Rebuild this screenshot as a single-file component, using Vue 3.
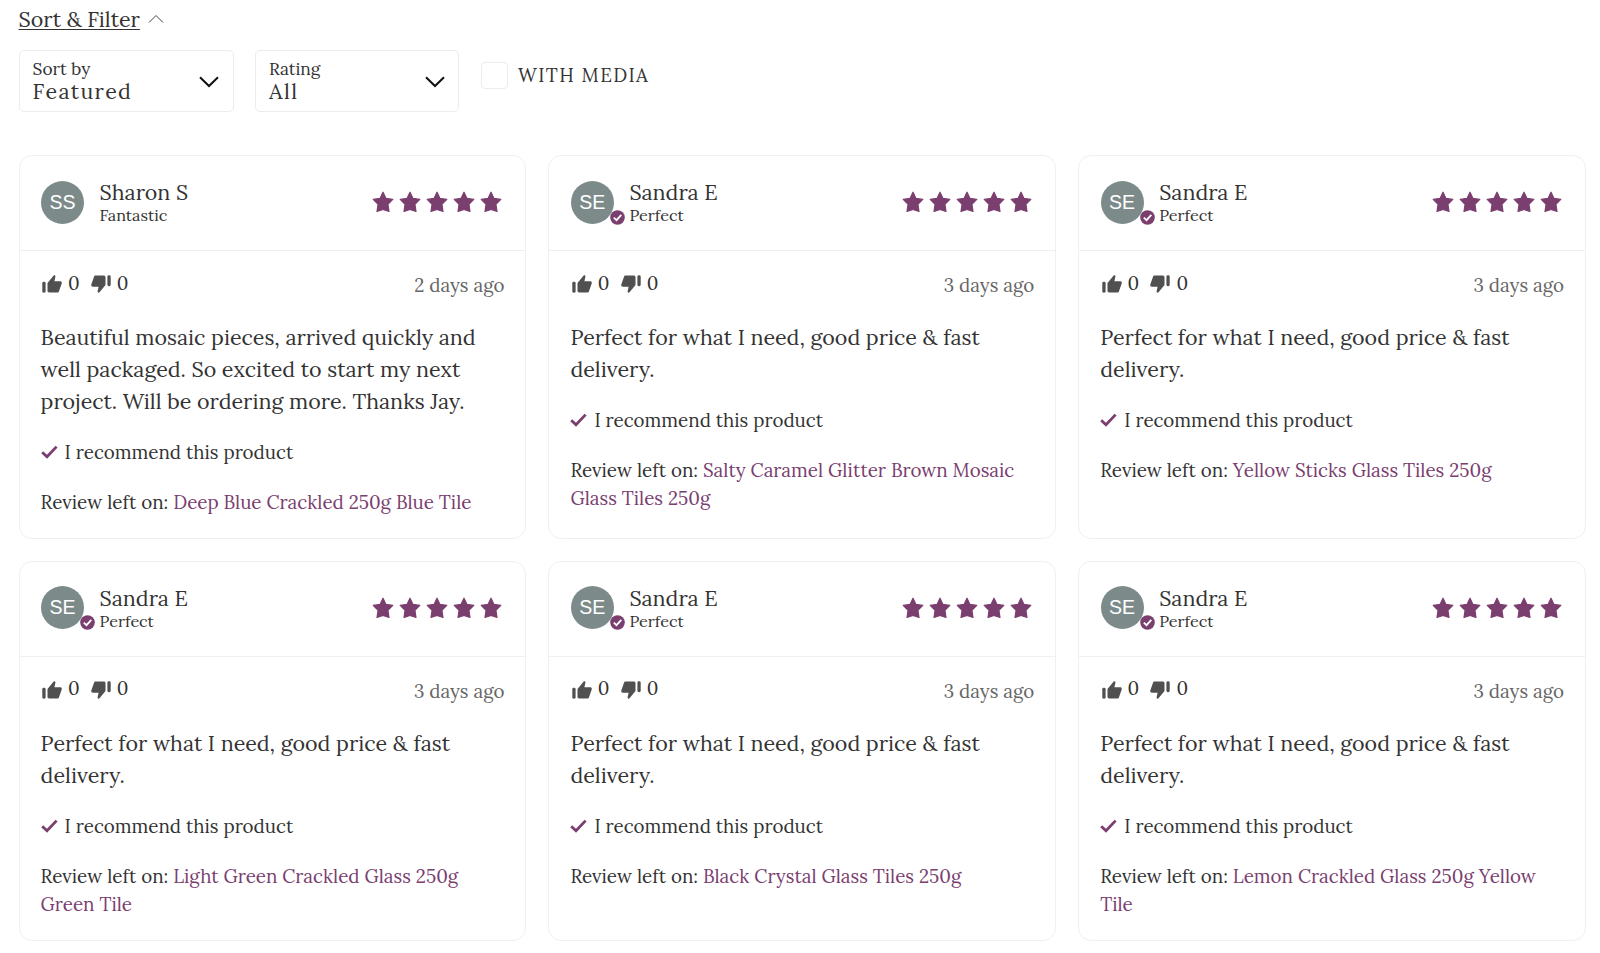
<script setup>
import { ref } from 'vue'

const showFilters = ref(true)
const withMedia = ref(false)

const filters = [
  { id: 'sort', label: 'Sort by', value: 'Featured' },
  { id: 'rating', label: 'Rating', value: 'All' }
]

const sandra = {
  name: 'Sandra E',
  initials: 'SE',
  title: 'Perfect',
  verified: true,
  date: '3 days ago',
  text: 'Perfect for what I need, good price & fast delivery.'
}

const reviews = [
  {
    id: 1,
    name: 'Sharon S',
    initials: 'SS',
    title: 'Fantastic',
    verified: false,
    date: '2 days ago',
    text: 'Beautiful mosaic pieces, arrived quickly and well packaged. So excited to start my next project. Will be ordering more. Thanks Jay.',
    product: 'Deep Blue Crackled 250g Blue Tile'
  },
  { id: 2, ...sandra, product: 'Salty Caramel Glitter Brown Mosaic Glass Tiles 250g' },
  { id: 3, ...sandra, product: 'Yellow Sticks Glass Tiles 250g' },
  { id: 4, ...sandra, product: 'Light Green Crackled Glass 250g Green Tile' },
  { id: 5, ...sandra, product: 'Black Crystal Glass Tiles 250g' },
  { id: 6, ...sandra, product: 'Lemon Crackled Glass 250g Yellow Tile' }
]
</script>

<template>
  <main class="reviews">
    <div class="toggle" @click="showFilters = !showFilters">
      <span class="toggle-label">Sort &amp; Filter</span>
      <svg class="toggle-icon" viewBox="0 0 16 10">
        <path d="M1 8.5 8 1.5l7 7" />
      </svg>
    </div>

    <div v-if="showFilters" class="filters">
      <div v-for="f in filters" :key="f.id" class="select" :class="'select-' + f.id">
        <div>
          <div class="select-label">{{ f.label }}</div>
          <div class="select-value">{{ f.value }}</div>
        </div>
        <svg class="select-icon" viewBox="0 0 20 12">
          <path d="M1 1.2 10 10l9-8.8" />
        </svg>
      </div>
      <div class="media" @click="withMedia = !withMedia">
        <span class="checkbox" :class="{ checked: withMedia }"></span>
        <span class="media-label">WITH MEDIA</span>
      </div>
    </div>

    <section class="grid">
      <article v-for="r in reviews" :key="r.id" class="card">
        <header class="card-header">
          <div class="avatar">
            {{ r.initials }}
            <svg v-if="r.verified" class="badge" viewBox="0 0 15 15">
              <circle cx="7.5" cy="7.5" r="7.3" />
              <path d="M3.8 7.7 6.5 10.2l4.8-5.4" />
            </svg>
          </div>
          <div class="author">
            <div class="name">{{ r.name }}</div>
            <div class="title">{{ r.title }}</div>
          </div>
          <div class="stars">
            <svg v-for="n in 5" :key="n" viewBox="0 0 22 22">
              <path d="M11 1.2 14 7.4l6.8 1-4.9 4.8 1.1 7.3-6-2-6 2 1.1-7.3L1.2 8.4l6.8-1z" />
            </svg>
          </div>
        </header>

        <div class="card-body">
          <div class="meta">
            <div class="votes">
              <svg class="thumb" viewBox="0 0 20 18">
                <rect x="0.3" y="6.8" width="3.3" height="10.9" rx="1.4" />
                <path d="M5.5 8 11.7.5c.9-.6 1.9.2 1.7 1.2l-1 4.6h5.7c1.4 0 2 1.1 1.6 2.3l-2.8 7.8c-.3.8-.8 1.1-1.6 1.1H7.2c-1.1 0-1.7-.7-1.7-1.7z" />
              </svg>
              <span class="count">0</span>
              <svg class="thumb thumb-down" viewBox="0 0 20 18">
                <rect x="0.3" y="6.8" width="3.3" height="10.9" rx="1.4" />
                <path d="M5.5 8 11.7.5c.9-.6 1.9.2 1.7 1.2l-1 4.6h5.7c1.4 0 2 1.1 1.6 2.3l-2.8 7.8c-.3.8-.8 1.1-1.6 1.1H7.2c-1.1 0-1.7-.7-1.7-1.7z" />
              </svg>
              <span class="count">0</span>
            </div>
            <div class="date">{{ r.date }}</div>
          </div>

          <p class="text">{{ r.text }}</p>

          <div class="recommend">
            <svg class="check" viewBox="0 0 17 14">
              <path d="M1.2 7.2 6 11.8 15.6 1.6" />
            </svg>
            <span>I recommend this product</span>
          </div>

          <div class="product">
            Review left on: <a class="product-link">{{ r.product }}</a>
          </div>
        </div>
      </article>
    </section>
  </main>
</template>

<style>
body {
  background: #fff;
}
</style>

<style scoped>
.reviews {
  box-sizing: border-box;
  height: 953px;
  padding: 6px 14px 0 18.6px;
  overflow: hidden;
  font-family: Lora, 'Liberation Serif', serif;
  color: #333;
}

.toggle {
  display: flex;
  align-items: center;
  height: 26px;
  cursor: pointer;
}

.toggle-label {
  font-size: 21.45px;
  line-height: 26px;
  text-decoration: underline;
  text-decoration-thickness: 1px;
  text-underline-offset: 2px;
}

.toggle-icon {
  width: 16px;
  height: 10px;
  margin-left: 8px;
  fill: none;
  stroke: #444;
  stroke-width: 1;
}

.filters {
  display: flex;
  align-items: flex-start;
  margin-top: 18px;
}

.select {
  box-sizing: border-box;
  display: flex;
  align-items: center;
  justify-content: space-between;
  height: 62px;
  margin-right: 21.5px;
  padding: 0 13.5px 0 13px;
  border: 1px solid #ececec;
  border-radius: 5px;
}

.select-sort {
  width: 215px;
}

.select-rating {
  width: 204px;
}

.select-label {
  font-size: 17.3px;
  line-height: 22px;
}

.select-value {
  padding-bottom: 1px;
  font-size: 21.45px;
  line-height: 23px;
  letter-spacing: 1.4px;
}

.select-icon {
  width: 20px;
  height: 12px;
  margin-top: 1px;
  fill: none;
  stroke: #111;
  stroke-width: 2;
}

.media {
  display: flex;
  align-items: center;
  margin-top: 11.5px;
  cursor: pointer;
}

.checkbox {
  box-sizing: border-box;
  width: 27px;
  height: 27px;
  margin-right: 10.5px;
  border: 1px solid #ececec;
  border-radius: 4px;
}

.checkbox.checked {
  background: #7a3e6f;
}

.media-label {
  font-size: 18.76px;
  line-height: 27px;
  letter-spacing: 1.4px;
}

.grid {
  display: grid;
  grid-template-columns: repeat(3, 1fr);
  gap: 21.4px 22px;
  margin-top: 43px;
}

.card {
  border: 1px solid #f0f0f0;
  border-radius: 13px;
}

.card-header {
  display: flex;
  align-items: center;
  box-sizing: border-box;
  height: 95px;
  padding: 0 23.5px 2px 21.4px;
  border-bottom: 1px solid #f0f0f0;
}

.avatar {
  position: relative;
  width: 43px;
  height: 43px;
  margin-right: 15.6px;
  border-radius: 50%;
  background: #7c8b8a;
  color: #fff;
  font-family: 'Liberation Sans', Arial, sans-serif;
  font-size: 19.5px;
  line-height: 43px;
  text-align: center;
}

.badge {
  position: absolute;
  right: -11px;
  bottom: -1px;
  width: 15px;
  height: 15px;
  fill: #7a3e6f;
}

.badge path {
  fill: none;
  stroke: #fff;
  stroke-width: 1.8;
}

.author {
  padding-top: 1.6px;
}

.name {
  font-size: 21.45px;
  line-height: 24px;
}

.title {
  font-size: 16.2px;
  line-height: 22px;
}

.stars {
  display: flex;
  gap: 4.9px;
  margin-left: auto;
}

.stars svg {
  width: 22px;
  height: 22px;
  fill: #7a3e6f;
  stroke: #7a3e6f;
  stroke-width: 1.2;
  stroke-linejoin: round;
}

.card-body {
  padding: 19px 21px 22.4px;
}

.meta {
  display: flex;
  justify-content: space-between;
  height: 51px;
}

.votes {
  display: flex;
  align-items: center;
  height: 28px;
}

.thumb {
  width: 20px;
  height: 18px;
  margin: 0 6px 0 1.4px;
  fill: #505050;
}

.thumb-down {
  margin-left: 11.2px;
  transform: rotate(180deg);
}

.count {
  padding-bottom: 3px;
  font-size: 18.76px;
  line-height: 22px;
}

.date {
  padding-top: 2px;
  font-size: 18.76px;
  line-height: 26px;
  color: #666;
}

.text {
  margin: 0;
  font-size: 21.47px;
  line-height: 32px;
}

.recommend {
  display: flex;
  align-items: center;
  margin-top: 21px;
  font-size: 18.78px;
  line-height: 28px;
}

.check {
  width: 17px;
  height: 14px;
  margin-right: 7px;
  fill: none;
  stroke: #7a3e6f;
  stroke-width: 2.8;
}

.product {
  margin-top: 22px;
  font-size: 18.78px;
  line-height: 28px;
}

.product-link {
  color: #7a3e6f;
}
</style>
